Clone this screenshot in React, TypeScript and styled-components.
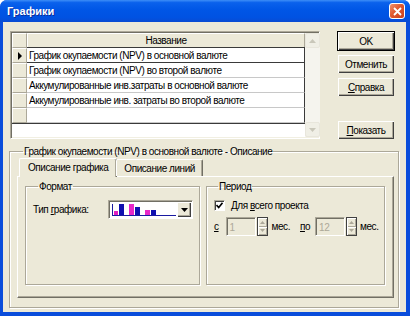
import React from 'react';
import styled, { createGlobalStyle } from 'styled-components';

const Global = createGlobalStyle`
  html, body { margin: 0; padding: 0; background: #fff; }
  body { font-family: "Liberation Sans", Arial, sans-serif; font-size: 10px; letter-spacing: -0.45px; color: #000; }
  * { box-sizing: border-box; }
`;

const Window = styled.div`
  width: 410px;
  height: 316px;
  display: flex;
  flex-direction: column;
  background: #0a4ddb;
  border-radius: 7px 7px 0 0;
  overflow: hidden;
`;

const TitleBar = styled.div`
  height: 22px;
  flex: none;
  display: flex;
  align-items: center;
  justify-content: space-between;
  padding: 0 5px 0 7px;
  background: linear-gradient(to bottom, #3d8ef7 0%, #0a61ec 12%, #0056e6 45%, #0052e2 80%, #0a4bd2 100%);
`;

const TitleText = styled.span`
  color: #fff;
  font-family: "Liberation Sans", Arial, sans-serif;
  font-weight: bold;
  font-size: 11px;
  letter-spacing: 0;
  text-shadow: 1px 1px 0 #0b2f9c;
`;

const CloseBtn = styled.div`
  width: 16px;
  height: 16px;
  border: 1px solid #fff;
  border-radius: 3px;
  background: linear-gradient(135deg, #f0926f 0%, #e0592f 45%, #c8401d 100%);
  display: flex;
  align-items: center;
  justify-content: center;
`;

const Body = styled.div`
  flex: 1;
  margin: 0 4px 4px 3px;
  background: #ece9d8;
  display: flex;
  flex-direction: column;
  padding: 9px 0 0 6px;
`;

const TopRow = styled.div`
  display: flex;
  align-items: flex-start;
  height: 109px;
  flex: none;
`;

const GridBox = styled.div`
  margin-left: 1px;
  width: 310px;
  height: 108px;
  background: #fff;
  border-top: 1px solid #aca899;
  border-left: 1px solid #aca899;
  border-right: 1px solid #fff;
  border-bottom: 1px solid #fff;
  box-shadow: inset 1px 1px 0 #716f64, inset -1px -1px 0 #f1efe2;
  padding: 1px;
  display: flex;
`;

const TableArea = styled.div`
  flex: 1;
  display: flex;
  flex-direction: column;
`;

const Table = styled.div`
  display: grid;
  grid-template-columns: 15px 278px;
  grid-auto-rows: 15px;
  border-bottom: 1px solid #3a3a3a;
`;

const HeadCell = styled.div`
  background: #ece9d8;
  border-top: 1px solid #fff;
  border-left: 1px solid #fff;
  border-right: 1px solid #aca899;
  border-bottom: 1px solid #aca899;
  display: flex;
  align-items: center;
  justify-content: center;
  color: #000;
`;

const Indicator = styled.div`
  background: #ece9d8;
  border-top: 1px solid #fff;
  border-left: 1px solid #fff;
  border-right: 1px solid #aca899;
  border-bottom: 1px solid #aca899;
  display: flex;
  align-items: center;
  justify-content: center;
`;

const Cell = styled.div<{ $current?: boolean }>`
  background: #fff;
  border-right: 1px solid #3a3a3a;
  border-bottom: 1px solid ${p => (p.$current ? '#3a3a3a' : '#c8c8c8')};
  border-top: ${p => (p.$current ? '1px solid #3a3a3a' : 'none')};
  margin-top: ${p => (p.$current ? '-1px' : '0')};
  padding-left: 2px;
  display: flex;
  align-items: center;
  white-space: nowrap;
  overflow: hidden;
`;

const ScrollBar = styled.div`
  width: 15px;
  display: flex;
  flex-direction: column;
  justify-content: space-between;
  background: #f5f4ee;
`;

const ScrollBtn = styled.div`
  width: 15px;
  height: 15px;
  border: 1px solid #e8e6dc;
  border-radius: 2px;
  background: #f0efe6;
  display: flex;
  align-items: center;
  justify-content: center;
`;

const ButtonCol = styled.div`
  margin-left: 17px;
  display: flex;
  flex-direction: column;
  gap: 3px;
  width: 58px;
`;

const Button = styled.div<{ $default?: boolean; $gap?: number }>`
  height: 20px;
  margin-top: ${p => p.$gap || 0}px;
  background: #ece9d8;
  border: 1px solid ${p => (p.$default ? '#000' : 'transparent')};
  box-shadow: inset 1px 1px 0 #fff, inset -1px -1px 0 #404040, inset -2px -2px 0 #aca899;
  display: flex;
  align-items: center;
  justify-content: center;
`;

const U = styled.span`
  text-decoration: underline;
`;

const GroupBox = styled.fieldset<{ $w: number; $h: number }>`
  margin: 0;
  padding: 0;
  width: ${p => p.$w}px;
  height: ${p => p.$h}px;
  border: 1px solid #aca899;
  box-shadow: inset 1px 1px 0 #fff, 1px 1px 0 #fff;
  min-width: 0;
`;

const Legend = styled.legend<{ $ml: number }>`
  margin-left: ${p => p.$ml}px;
  padding: 0 1px;
  line-height: 13px;
`;

const OuterGroup = styled(GroupBox)`
  margin-top: 5px;
  padding: 0 4px 0 7px;
`;

const Tabs = styled.div`
  display: flex;
  height: 18px;
  align-items: flex-end;
  padding-left: 3px;
  position: relative;
  z-index: 1;
`;

const Tab = styled.div<{ $active?: boolean }>`
  height: ${p => (p.$active ? 19 : 17)}px;
  margin-bottom: ${p => (p.$active ? -1 : 0)}px;
  margin-left: ${p => (p.$active ? -1 : 0)}px;
  margin-right: ${p => (p.$active ? -1 : 0)}px;
  padding: 0 ${p => (p.$active ? 8 : 7)}px ${p => (p.$active ? 2 : 0)}px;
  background: #ece9d8;
  border-top: 1px solid #fff;
  border-left: 1px solid #fff;
  border-right: 1px solid #716f64;
  box-shadow: inset -1px 0 0 #aca899;
  border-radius: 2px 2px 0 0;
  display: flex;
  align-items: center;
`;

const Panel = styled.div`
  height: 122px;
  border-top: 1px solid #fff;
  border-left: 1px solid #fff;
  border-right: 1px solid #716f64;
  border-bottom: 1px solid #716f64;
  box-shadow: inset -1px -1px 0 #aca899;
  display: flex;
  gap: 6px;
  padding: 3px 7px 0 7px;
`;

const InnerGroup = styled(GroupBox)`
  padding: 7px 0 0 7px;
`;

const Row = styled.div<{ $mt?: number }>`
  display: flex;
  align-items: center;
  margin-top: ${p => p.$mt || 0}px;
`;

const Label = styled.span<{ $w?: number; $ml?: number }>`
  width: ${p => (p.$w ? `${p.$w}px` : 'auto')};
  margin-left: ${p => p.$ml || 0}px;
  color: #000;
  white-space: nowrap;
`;

const Combo = styled.div`
  width: 85px;
  height: 19px;
  background: #fff;
  border-top: 1px solid #aca899;
  border-left: 1px solid #aca899;
  border-right: 1px solid #fff;
  border-bottom: 1px solid #fff;
  box-shadow: inset 1px 1px 0 #716f64;
  display: flex;
  align-items: center;
  padding: 1px 1px 1px 3px;
`;

const ComboBtn = styled.div`
  width: 14px;
  height: 15px;
  margin-left: auto;
  background: #ece9d8;
  box-shadow: inset 1px 1px 0 #fff, inset -1px -1px 0 #404040, inset -2px -2px 0 #aca899;
  display: flex;
  align-items: center;
  justify-content: center;
`;

const CheckBox = styled.div`
  width: 11px;
  height: 11px;
  background: #fff;
  border-top: 1px solid #aca899;
  border-left: 1px solid #aca899;
  border-right: 1px solid #fff;
  border-bottom: 1px solid #fff;
  box-shadow: inset 1px 1px 0 #404040;
  display: flex;
  align-items: center;
  justify-content: center;
`;

const SpinEdit = styled.div<{ $ml: number }>`
  display: flex;
  margin-left: ${p => p.$ml}px;
  height: 19px;
`;

const SpinInput = styled.div`
  width: 30px;
  height: 19px;
  background: #ece9d8;
  border-top: 1px solid #aca899;
  border-left: 1px solid #aca899;
  border-right: 1px solid #fff;
  border-bottom: 1px solid #fff;
  box-shadow: inset 1px 1px 0 #716f64;
  color: #aca899;
  padding: 1px 0 0 3px;
  display: flex;
  align-items: center;
`;

const SpinBtns = styled.div`
  width: 11px;
  height: 19px;
  margin-left: 1px;
  display: flex;
  flex-direction: column;
  border: 1px solid #404040;
`;

const SpinHalf = styled.div`
  flex: 1;
  background: #ece9d8;
  box-shadow: inset 1px 1px 0 #fff, inset -1px -1px 0 #aca899;
  display: flex;
  align-items: center;
  justify-content: center;
`;

const Arrow = ({ dir, color = '#000', w = 5 }: { dir: 'up' | 'down' | 'right'; color?: string; w?: number }) => {
  const h = Math.ceil(w / 2);
  if (dir === 'right')
    return (
      <svg width={h} height={w} viewBox={`0 0 ${h} ${w}`}>
        <polygon points={`0,0 ${h},${w / 2} 0,${w}`} fill={color} />
      </svg>
    );
  const pts = dir === 'up' ? `0,${h} ${w / 2},0 ${w},${h}` : `0,0 ${w / 2},${h} ${w},0`;
  return (
    <svg width={w} height={h} viewBox={`0 0 ${w} ${h}`}>
      <polygon points={pts} fill={color} />
    </svg>
  );
};

const ChartIcon = () => (
  <svg width="64" height="13" viewBox="0 0 64 13">
    <rect x="0" y="1" width="1" height="11" fill="#1a1aa0" />
    <rect x="2" y="8" width="4" height="4" fill="#e020c0" />
    <rect x="7" y="1" width="5" height="11" fill="#1010b0" />
    <rect x="17" y="1" width="5" height="11" fill="#e828c8" />
    <rect x="23" y="4" width="5" height="8" fill="#1010b0" />
    <rect x="33" y="7" width="5" height="5" fill="#e828c8" />
    <rect x="39" y="7" width="5" height="5" fill="#1010b0" />
    <rect x="0" y="12" width="64" height="1" fill="#1a1aa0" />
  </svg>
);

const Spin = ({ value, ml }: { value: string; ml: number }) => (
  <SpinEdit $ml={ml}>
    <SpinInput>{value}</SpinInput>
    <SpinBtns>
      <SpinHalf>
        <Arrow dir="up" color="#aca899" w={5} />
      </SpinHalf>
      <SpinHalf>
        <Arrow dir="down" color="#aca899" w={5} />
      </SpinHalf>
    </SpinBtns>
  </SpinEdit>
);

const rows = [
  'График окупаемости (NPV) в основной валюте',
  'График окупаемости (NPV) во второй валюте',
  'Аккумулированные инв.затраты в основной валюте',
  'Аккумулированные инв. затраты во второй валюте',
  '',
];

export default function App() {
  return (
    <>
      <Global />
      <Window>
        <TitleBar>
          <TitleText>Графики</TitleText>
          <CloseBtn>
            <svg width="9" height="9" viewBox="0 0 9 9">
              <path d="M1 1 L8 8 M8 1 L1 8" stroke="#fff" strokeWidth="1.8" />
            </svg>
          </CloseBtn>
        </TitleBar>
        <Body>
          <TopRow>
            <GridBox>
              <TableArea>
                <Table>
                  <HeadCell />
                  <HeadCell>Название</HeadCell>
                  {rows.map((r, i) => (
                    <React.Fragment key={i}>
                      <Indicator>{i === 0 && <Arrow dir="right" w={8} />}</Indicator>
                      <Cell $current={i === 0}>{r}</Cell>
                    </React.Fragment>
                  ))}
                </Table>
              </TableArea>
              <ScrollBar>
                <ScrollBtn>
                  <Arrow dir="up" color="#c9c7ba" w={7} />
                </ScrollBtn>
                <ScrollBtn>
                  <Arrow dir="down" color="#c9c7ba" w={7} />
                </ScrollBtn>
              </ScrollBar>
            </GridBox>
            <ButtonCol>
              <Button $default>OK</Button>
              <Button>Отменить</Button>
              <Button>
                <U>С</U>правка
              </Button>
              <Button $gap={20}>
                <U>П</U>оказать
              </Button>
            </ButtonCol>
          </TopRow>
          <OuterGroup $w={390} $h={163}>
            <Legend $ml={6}>График окупаемости (NPV) в основной валюте - Описание</Legend>
            <Tabs>
              <Tab $active>Описание графика</Tab>
              <Tab>Описание линий</Tab>
            </Tabs>
            <Panel>
              <InnerGroup $w={175} $h={105}>
                <Legend $ml={5}>Формат</Legend>
                <Row>
                  <Label $w={75}>
                    Тип <U>г</U>рафика:
                  </Label>
                  <Combo>
                    <ChartIcon />
                    <ComboBtn>
                      <Arrow dir="down" w={7} />
                    </ComboBtn>
                  </Combo>
                </Row>
              </InnerGroup>
              <InnerGroup $w={179} $h={105}>
                <Legend $ml={4}>Период</Legend>
                <Row>
                  <CheckBox>
                    <svg width="7" height="7" viewBox="0 0 7 7">
                      <path d="M0.5 3 L2.7 5.5 L6.5 0.8" stroke="#000" strokeWidth="1.6" fill="none" />
                    </svg>
                  </CheckBox>
                  <Label $ml={6}>
                    Для <U>в</U>сего проекта
                  </Label>
                </Row>
                <Row $mt={6}>
                  <Label>
                    <U>с</U>
                  </Label>
                  <Spin value="1" ml={7} />
                  <Label $ml={4}>мес.</Label>
                  <Label $ml={10}>
                    <U>п</U>о
                  </Label>
                  <Spin value="12" ml={5} />
                  <Label $ml={3}>мес.</Label>
                </Row>
              </InnerGroup>
            </Panel>
          </OuterGroup>
        </Body>
      </Window>
    </>
  );
}
